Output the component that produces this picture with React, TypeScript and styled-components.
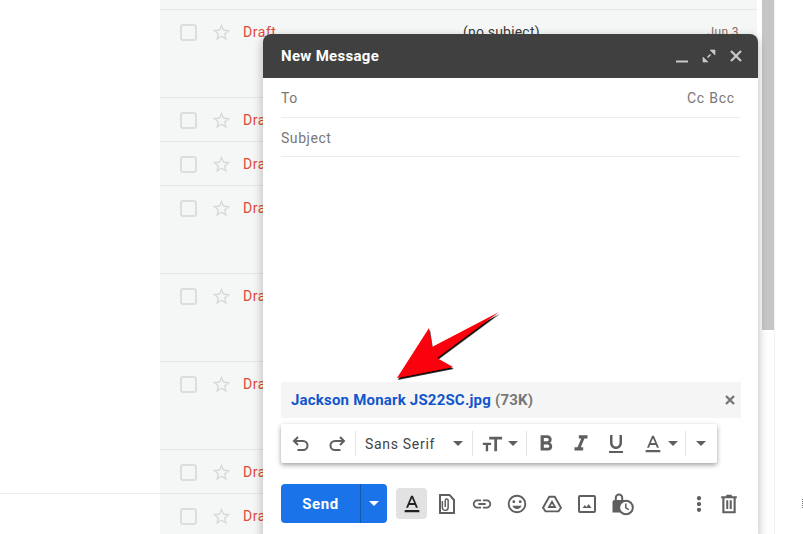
import React from "react";
import styled, { createGlobalStyle } from "styled-components";

const Global = createGlobalStyle`
  html, body { margin: 0; padding: 0; background: #fff; width: 803px; height: 534px; overflow: hidden; }
  body { font-family: Roboto, "Liberation Sans", sans-serif; }
`;

const Page = styled.div`
  position: relative;
  width: 803px;
  height: 534px;
  display: flex;
  overflow: hidden;
  background: #fff;
`;
const LeftPane = styled.div`
  width: 160px;
  flex: none;
  padding-top: 493px;
  box-sizing: border-box;
`;
const LeftRule = styled.div`
  border-top: 1px solid #eceeee;
`;
const List = styled.div`
  width: 597px;
  flex: none;
  background: #f5f7f7;
  padding-top: 9px;
  box-sizing: border-box;
`;
const Row = styled.div<{ $tall?: boolean }>`
  height: ${(p) => (p.$tall ? 88 : 44)}px;
  box-sizing: border-box;
  border-top: 1px solid #e6e8e8;
  display: flex;
  align-items: flex-start;
  padding: 13px 18px 0 20px;
  font-size: 14px;
  line-height: 18px;
`;
const Check = styled.span`
  width: 17px;
  height: 17px;
  box-sizing: border-box;
  border: 2px solid #dcdede;
  border-radius: 3px;
  margin-top: 1px;
  flex: none;
`;
const Star = styled.svg`
  width: 21px;
  height: 21px;
  margin: -1px 0 0 14px;
  fill: #d8dada;
  flex: none;
`;
const Draft = styled.span`
  margin-left: 11px;
  width: 220px;
  color: #e0483a;
  letter-spacing: 0.55px;
  flex: none;
`;
const Subject = styled.span`
  color: #3a3a3a;
  flex: 1;
  letter-spacing: 0.2px;
`;
const DateText = styled.span`
  font-size: 12px;
  color: #8a6d5f;
  letter-spacing: 0.4px;
`;
const Gutter = styled.div`
  width: 18px;
  flex: none;
  padding-left: 5px;
  box-sizing: border-box;
  border-right: 1px solid #f1f1f1;
`;
const Thumb = styled.div`
  width: 12px;
  height: 330px;
  background: #c6c6c6;
`;
const EdgeMark = styled.span`
  position: absolute;
  left: 802px;
  top: 499px;
  width: 1px;
  height: 9px;
  border-left: 1px dotted #777;
`;

const Compose = styled.div`
  position: absolute;
  left: 263px;
  top: 34px;
  width: 495px;
  height: 500px;
  background: #fff;
  border-radius: 8px 8px 0 0;
  box-shadow: 0 4px 8px 2px rgba(0, 0, 0, 0.2);
  display: flex;
  flex-direction: column;
`;
const Header = styled.div`
  height: 44px;
  flex: none;
  background: #404040;
  border-radius: 8px 8px 0 0;
  display: flex;
  align-items: center;
  padding: 0 15px 0 18px;
  color: #fff;
  font-weight: 700;
  font-size: 15px;
  letter-spacing: 0.3px;
`;
const HeaderTitle = styled.span`
  flex: 1;
`;
const HeaderIcon = styled.svg`
  width: 14px;
  height: 14px;
  margin-left: 13px;
  stroke: #c9c9c9;
  fill: none;
  stroke-width: 2;
`;
const Field = styled.div<{ $h: number; $pt?: number }>`
  margin: 0 18px;
  box-sizing: border-box;
  border-bottom: 1px solid #ececec;
  display: flex;
  align-items: center;
  justify-content: space-between;
  color: #777;
  font-size: 14px;
  letter-spacing: 0.55px;
  height: ${(p) => p.$h}px;
  padding-top: ${(p) => p.$pt ?? 0}px;
  flex: none;
`;
const CcBcc = styled.span`
  padding-right: 5px;
  color: #777;
  letter-spacing: 0.8px;
`;
const Body = styled.div`
  flex: 1;
`;
const Attachment = styled.div`
  margin: 0 17px 0 18px;
  height: 36px;
  flex: none;
  background: #f5f5f5;
  display: flex;
  align-items: center;
  padding: 0 6px 0 10px;
  font-size: 15px;
  letter-spacing: 0.2px;
  font-weight: 700;
`;
const FileName = styled.span`
  color: #1155cc;
`;
const FileSize = styled.span`
  color: #777;
  margin-left: 4px;
  flex: 1;
`;
const FileClose = styled.svg`
  width: 10px;
  height: 10px;
  stroke: #777;
  stroke-width: 2.4;
  fill: none;
`;
const Toolbar = styled.div`
  margin: 6px 0 0 18px;
  width: 436px;
  height: 39px;
  flex: none;
  background: #fff;
  border-radius: 2px;
  box-shadow: 0 2px 5px rgba(0, 0, 0, 0.38);
  display: flex;
  align-items: center;
  padding-left: 2px;
  box-sizing: border-box;
  color: #444;
`;
const ToolCell = styled.span<{ $w?: number }>`
  width: ${(p) => p.$w ?? 35}px;
  height: 39px;
  flex: none;
  display: flex;
  align-items: center;
  justify-content: center;
`;
const Sep = styled.span`
  width: 1px;
  height: 25px;
  background: #e4e4e4;
  flex: none;
`;
const FontBtn = styled.span`
  width: 107px;
  padding-left: 9px;
  flex: none;
  display: flex;
  align-items: center;
  font-size: 14px;
  letter-spacing: 0.7px;
  color: #444;
`;
const FontName = styled.span`
  flex: 1;
`;
const Caret = styled.span<{ $c?: string }>`
  width: 0;
  height: 0;
  border-left: 5px solid transparent;
  border-right: 5px solid transparent;
  border-top: 5px solid ${(p) => p.$c ?? "#5f5f5f"};
  flex: none;
`;
const Icon = styled.svg<{ $s?: number }>`
  width: ${(p) => p.$s ?? 22}px;
  height: ${(p) => p.$s ?? 22}px;
  fill: #5f5f5f;
  fill-rule: evenodd;
  flex: none;
`;
const Footer = styled.div`
  margin: 21px 0 11px 18px;
  height: 39px;
  flex: none;
  display: flex;
  align-items: center;
`;
const SendBtn = styled.div`
  width: 106px;
  height: 39px;
  display: flex;
  border-radius: 4px;
  background: #1a73e8;
  color: #fff;
  font-weight: 700;
  font-size: 15px;
  letter-spacing: 0.6px;
  flex: none;
`;
const SendLabel = styled.span`
  width: 79px;
  display: flex;
  align-items: center;
  justify-content: center;
  border-right: 1px solid #1558b0;
`;
const SendDrop = styled.span`
  flex: 1;
  display: flex;
  align-items: center;
  justify-content: center;
`;
const FormatBtn = styled.span`
  width: 31px;
  height: 31px;
  margin: 0 2px 0 9px;
  border-radius: 4px;
  background: #e2e2e2;
  display: flex;
  align-items: center;
  justify-content: center;
  flex: none;
`;
const FootCell = styled.span<{ $w?: number }>`
  width: ${(p) => p.$w ?? 35}px;
  display: flex;
  align-items: center;
  justify-content: center;
  flex: none;
`;
const FootGap = styled.span`
  flex: 1;
`;
const Arrow = styled.svg`
  position: absolute;
  left: 126px;
  top: 270px;
  width: 120px;
  height: 85px;
  overflow: visible;
`;

const rows = [true, false, false, true, true, true, false, false];

const P = {
  star: "M22 9.24l-7.19-.62L12 2 9.19 8.63 2 9.24l5.46 4.73L5.82 21 12 17.27 18.18 21l-1.64-7.03L22 9.24zM12 15.4l-3.76 2.27 1-4.28-3.32-2.88 4.38-.38L12 6.1l1.71 4.04 4.38.38-3.32 2.88 1 4.28L12 15.4z",
  bold: "M15.6 10.79c.97-.67 1.65-1.77 1.65-2.79 0-2.26-1.75-4-4-4H7v14h7.04c2.09 0 3.71-1.7 3.71-3.79 0-1.52-.86-2.82-2.15-3.42zM10 6.5h3c.83 0 1.5.67 1.5 1.5s-.67 1.5-1.5 1.5h-3v-3zm3.5 9H10v-3h3.5c.83 0 1.5.67 1.5 1.5s-.67 1.5-1.5 1.5z",
  italic: "M10 4v3h2.21l-3.42 8H6v3h8v-3h-2.21l3.42-8H18V4z",
  underline: "M12 17c3.31 0 6-2.69 6-6V3h-2.5v8c0 1.93-1.57 3.5-3.5 3.5S8.5 12.93 8.5 11V3H6v8c0 3.31 2.69 6 6 6zm-7 2v2h14v-2H5z",
  color: "M11 3L5.5 16h2.25l1.12-3h6.25l1.12 3h2.25L13 3h-2zm-1.38 8L12 5.67 14.38 11H9.62zM4 18.5h16V21H4z",
  link: "M3.9 12c0-1.71 1.39-3.1 3.1-3.1h4V7H7c-2.76 0-5 2.24-5 5s2.24 5 5 5h4v-1.9H7c-1.71 0-3.1-1.39-3.1-3.1zM8 13h8v-2H8v2zm9-6h-4v1.9h4c1.71 0 3.1 1.39 3.1 3.1s-1.39 3.1-3.1 3.1h-4V17h4c2.76 0 5-2.24 5-5s-2.24-5-5-5z",
  emoji: "M11.99 2C6.47 2 2 6.48 2 12s4.47 10 9.99 10C17.52 22 22 17.52 22 12S17.52 2 11.99 2zM12 20c-4.42 0-8-3.58-8-8s3.58-8 8-8 8 3.58 8 8-3.58 8-8 8zm3.5-9c.83 0 1.5-.67 1.5-1.5S16.33 8 15.5 8 14 8.67 14 9.5s.67 1.5 1.5 1.5zm-7 0c.83 0 1.5-.67 1.5-1.5S9.33 8 8.5 8 7 8.67 7 9.5 7.67 11 8.5 11zm3.5 6.5c2.33 0 4.31-1.46 5.11-3.5H6.89c.8 2.04 2.78 3.5 5.11 3.5z",
  more: "M12 8c1.3 0 2.3-1 2.3-2.3S13.3 3.4 12 3.4 9.7 4.4 9.7 5.7 10.7 8 12 8zm0 1.7c-1.3 0-2.3 1-2.3 2.3s1 2.3 2.3 2.3 2.3-1 2.3-2.3-1-2.3-2.3-2.3zm0 6.3c-1.3 0-2.3 1-2.3 2.3s1 2.3 2.3 2.3 2.3-1 2.3-2.3-1-2.3-2.3-2.3z",
  trash: "M15 2v1.5h5.5v2.2h-1.2V22H4.7V5.7H3.5V3.5H9V2h6zM7 5.7V20h10V5.7H7zM9 8h2.2v9.5H9V8zm3.8 0H15v9.5h-2.2V8z",
  photo: "M5 3h14a2 2 0 0 1 2 2v14a2 2 0 0 1-2 2H5a2 2 0 0 1-2-2V5a2 2 0 0 1 2-2zm0 2v14h14V5H5zm2.5 11l2.4-3 1.7 2 2.1-3 2.8 4h-9z",
  drive: "M8.4 3h7.2L23 16l-3.4 5H4.4L1 16 8.4 3zm1.2 2.1L3.4 16l2.2 3h12.8l2.2-3L14.4 5.1H9.6zM12 7.5l5 8.8H7l5-8.8zm0 4.1l-1.6 2.7h3.2L12 11.6z",
  file: "M4 2h11l5 5.5V22H4V2zm2 2v16h12V8.4L14.2 4H6zm3.5 4.5a2.2 2.2 0 0 1 4.4 0v7a3.6 3.6 0 0 1-3.7 3.6 3.5 3.5 0 0 1-3.6-3.6V9h1.5v6.5a2.1 2.1 0 0 0 4.3 0v-7a.7.7 0 0 0-1.4 0V15H9.5V8.5z",
};

const Glyph = ({ d, s, c }: { d: string; s?: number; c?: string }) => (
  <Icon viewBox="0 0 24 24" $s={s} style={c ? { fill: c } : undefined}>
    <path d={d} />
  </Icon>
);

const Hook = ({ flip }: { flip?: boolean }) => (
  <svg
    width="20"
    height="20"
    viewBox="0 0 20 20"
    fill="none"
    stroke="#5f5f5f"
    strokeWidth="2"
    transform={flip ? "scale(-1 1)" : undefined}
  >
    <path d="M7 3L3 7l4 4M3 7h9a4.5 4.5 0 0 1 0 9H6.5" />
  </svg>
);

const LockClock = () => (
  <Icon viewBox="0 0 24 24" $s={24}>
    <path d="M9 1.5a4.2 4.2 0 0 1 4.2 4.2V8H16v12.5H2.5V10a2 2 0 0 1 2-2h.3V5.7A4.2 4.2 0 0 1 9 1.5zm0 2a2.2 2.2 0 0 0-2.2 2.2V8h4.4V5.7A2.2 2.2 0 0 0 9 3.5z" />
    <circle cx="16" cy="15.5" r="6.8" fill="#fff" stroke="#5f5f5f" strokeWidth="2" />
    <path d="M15.8 11.5v4.4l3 1.8" fill="none" stroke="#5f5f5f" strokeWidth="1.5" />
  </Icon>
);

export default function App() {
  return (
    <Page>
      <Global />
      <LeftPane>
        <LeftRule />
      </LeftPane>
      <List>
        {rows.map((tall, i) => (
          <Row key={i} $tall={tall}>
            <Check />
            <Star viewBox="0 0 24 24">
              <path d={P.star} />
            </Star>
            <Draft>Draft</Draft>
            {i === 0 && (
              <>
                <Subject>(no subject)</Subject>
                <DateText>Jun 3</DateText>
              </>
            )}
          </Row>
        ))}
      </List>
      <Gutter>
        <Thumb />
      </Gutter>
      <EdgeMark />
      <Compose>
        <Header>
          <HeaderTitle>New Message</HeaderTitle>
          <HeaderIcon viewBox="0 0 14 14">
            <path d="M1 12.5h12" />
          </HeaderIcon>
          <HeaderIcon viewBox="0 0 14 14">
            <path d="M5.5 8.5L8.5 5.5" strokeWidth="1.6" />
            <path d="M8 1h5v5L8 1zM1 8v5h5L1 8z" fill="#c9c9c9" strokeWidth="0.6" />
          </HeaderIcon>
          <HeaderIcon viewBox="0 0 14 14">
            <path d="M2 2l10 10M12 2L2 12" strokeWidth="2.2" />
          </HeaderIcon>
        </Header>
        <Field $h={40}>
          <span>To</span>
          <CcBcc>Cc Bcc</CcBcc>
        </Field>
        <Field $h={39} $pt={2}>
          <span>Subject</span>
        </Field>
        <Body />
        <Attachment>
          <FileName>Jackson Monark JS22SC.jpg</FileName>
          <FileSize>(73K)</FileSize>
          <FileClose viewBox="0 0 10 10">
            <path d="M1 1l8 8M9 1L1 9" />
          </FileClose>
        </Attachment>
        <Toolbar>
          <ToolCell>
            <Hook />
          </ToolCell>
          <ToolCell $w={37}>
            <Hook flip />
          </ToolCell>
          <Sep />
          <FontBtn>
            <FontName>Sans Serif</FontName>
            <Caret />
            <ToolCell $w={9} />
          </FontBtn>
          <Sep />
          <ToolCell $w={53}>
            <Icon viewBox="0 0 24 24" $s={22}>
              <path d="M9 4h14v3.2h-5.5V20h-3V7.2H9V4zM2 10.5h9V13H7.8v7H5.2v-7H2v-2.5z" />
            </Icon>
            <ToolCell $w={5} />
            <Caret />
          </ToolCell>
          <Sep />
          <ToolCell $w={38}>
            <Glyph d={P.bold} s={26} />
          </ToolCell>
          <ToolCell $w={32}>
            <Glyph d={P.italic} s={26} />
          </ToolCell>
          <ToolCell $w={38}>
            <Glyph d={P.underline} s={24} />
          </ToolCell>
          <ToolCell $w={50}>
            <Glyph d={P.color} />
            <ToolCell $w={4} />
            <Caret />
          </ToolCell>
          <Sep />
          <ToolCell $w={30}>
            <Caret />
          </ToolCell>
        </Toolbar>
        <Footer>
          <SendBtn>
            <SendLabel>Send</SendLabel>
            <SendDrop>
              <Caret $c="#fff" />
            </SendDrop>
          </SendBtn>
          <FormatBtn>
            <Glyph d={P.color} c="#222" />
          </FormatBtn>
          <FootCell>
            <Glyph d={P.file} s={24} />
          </FootCell>
          <FootCell>
            <Glyph d={P.link} />
          </FootCell>
          <FootCell>
            <Glyph d={P.emoji} />
          </FootCell>
          <FootCell>
            <Glyph d={P.drive} />
          </FootCell>
          <FootCell>
            <Glyph d={P.photo} s={24} />
          </FootCell>
          <FootCell>
            <LockClock />
          </FootCell>
          <FootGap />
          <FootCell $w={30}>
            <Glyph d={P.more} />
          </FootCell>
          <FootCell $w={30}>
            <Glyph d={P.trash} />
          </FootCell>
          <ToolCell $w={14} />
        </Footer>
        <Arrow viewBox="0 0 120 85">
          <defs>
            <filter id="arrowShadow" x="-10%" y="-10%" width="120%" height="130%">
              <feDropShadow dx="0.8" dy="1.8" stdDeviation="0.7" floodColor="#000" floodOpacity="1" />
            </filter>
          </defs>
          <polygon
            points="8,74 40,24 43,43 110,8 48,54 64,63"
            fill="#fb0007"
            filter="url(#arrowShadow)"
          />
        </Arrow>
      </Compose>
    </Page>
  );
}
